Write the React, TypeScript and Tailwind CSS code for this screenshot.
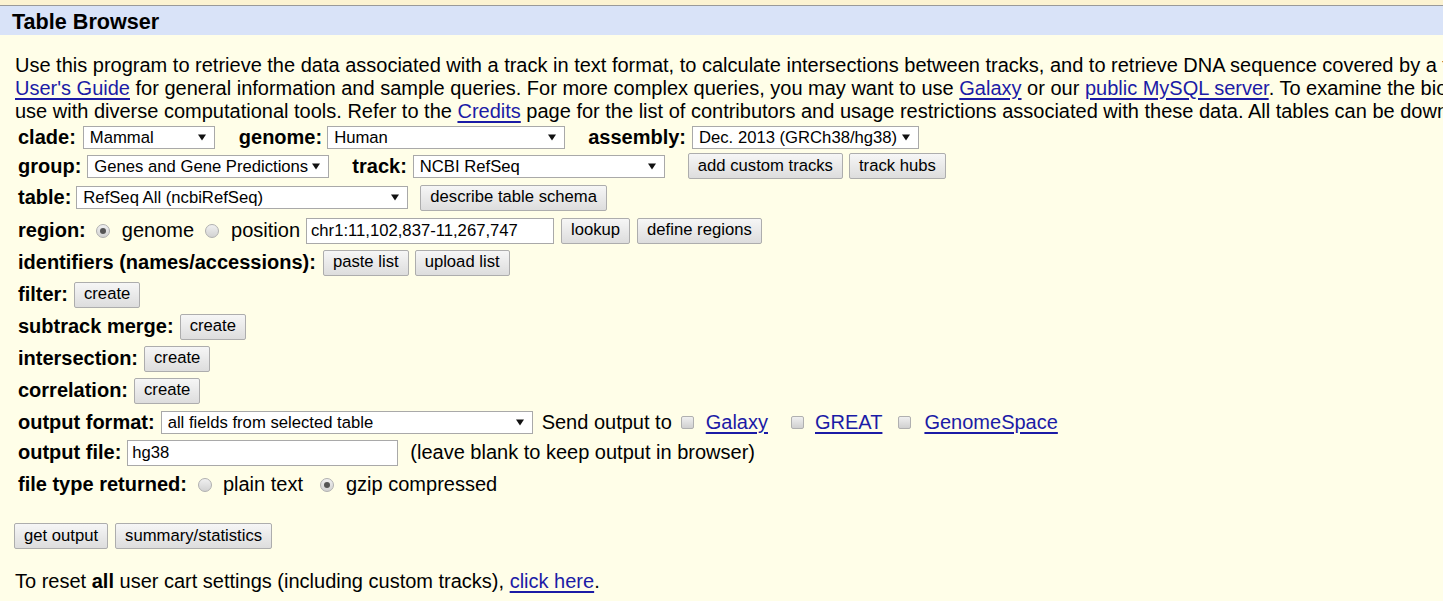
import type { ReactNode } from "react";

function Arrow() {
  return (
    <svg width="8" height="7" viewBox="0 0 8 7" className="shrink-0">
      <path d="M0 0.5 L8 0.5 L4 6.5 Z" fill="#111" />
    </svg>
  );
}

function Select({ value, width }: { value: string; width: string }) {
  return (
    <div
      className={`flex h-[23px] items-center justify-between border border-[#a9a9a9] bg-white pl-[6px] pr-[8px] text-[16.67px] text-black ${width}`}
    >
      <span className="whitespace-nowrap">{value}</span>
      <Arrow />
    </div>
  );
}

function Btn({ children, className = "" }: { children: ReactNode; className?: string }) {
  return (
    <button
      className={`h-[26px] whitespace-nowrap rounded-[2px] border border-[#adadad] bg-gradient-to-b from-[#f6f6f6] to-[#dddddd] px-[9px] text-[16.67px] leading-none text-black ${className}`}
    >
      {children}
    </button>
  );
}

function Radio({ checked, className = "" }: { checked?: boolean; className?: string }) {
  return (
    <span
      className={`flex h-[14px] w-[14px] shrink-0 items-center justify-center rounded-full border border-[#b0b0b0] bg-gradient-to-b from-[#f0f0f0] to-[#d2d2d2] ${className}`}
    >
      {checked && <span className="h-[6px] w-[6px] rounded-full bg-[#555]" />}
    </span>
  );
}

function Check({ className = "" }: { className?: string }) {
  return (
    <span
      className={`h-[13px] w-[13px] shrink-0 rounded-[2px] border border-[#b0b0b0] bg-gradient-to-b from-[#f0f0f0] to-[#d0d0d0] ${className}`}
    />
  );
}

function TextBox({ value, width }: { value: string; width: string }) {
  return (
    <div
      className={`flex h-[26px] items-center border border-[#a9a9a9] bg-white px-[4px] text-[16.67px] ${width}`}
    >
      {value}
    </div>
  );
}

function Label({ children }: { children: ReactNode }) {
  return <b className="whitespace-nowrap font-bold">{children}</b>;
}

function A({ children }: { children: ReactNode }) {
  return <a className="text-[#1b1ba6] underline underline-offset-[3px]">{children}</a>;
}

export default function App() {
  return (
    <div className="min-h-screen w-full overflow-hidden bg-[#fffee8] font-['Liberation_Sans',Arial,sans-serif] text-[20px] leading-[23px] text-black">
      <div className="h-[5px] bg-[#fcf3d2]" />
      <div className="h-[1px] bg-[#9a9a9a]" />
      <div className="flex h-[29px] items-center bg-[#d9e3f8] pl-[12px] pt-[2px] text-[21.6px] font-bold">
        Table Browser
      </div>

      <div className="whitespace-nowrap pl-[15px] pt-[18.5px]">
        Use this program to retrieve the data associated with a track in text format, to calculate
        intersections between tracks, and to retrieve DNA sequence covered by a track. For help in
        using this application see the
        <br />
        <A>User's Guide</A> for general information and sample queries. For more complex queries, you
        may want to use <A>Galaxy</A> or our <A>public MySQL server</A>. To examine the biological
        function of your set through annotation enrichments, send the data to GREAT.
        <br />
        use with diverse computational tools. Refer to the <A>Credits</A> page for the list of
        contributors and usage restrictions associated with these data. All tables can be downloaded
        in their entirety.
      </div>

      <div className="flex flex-col pl-[18px]">
        <div className="flex h-[29px] items-center">
          <Label>clade:</Label>
          <div className="ml-[7px]">
            <Select value="Mammal" width="w-[132px]" />
          </div>
          <div className="ml-[24px]">
            <Label>genome:</Label>
          </div>
          <div className="ml-[5px]">
            <Select value="Human" width="w-[238px]" />
          </div>
          <div className="ml-[23px]">
            <Label>assembly:</Label>
          </div>
          <div className="ml-[6px]">
            <Select value="Dec. 2013 (GRCh38/hg38)" width="w-[227px]" />
          </div>
        </div>

        <div className="flex h-[29px] items-center">
          <Label>group:</Label>
          <div className="ml-[6px]">
            <Select value="Genes and Gene Predictions" width="w-[242px]" />
          </div>
          <div className="ml-[23px]">
            <Label>track:</Label>
          </div>
          <div className="ml-[6px]">
            <Select value="NCBI RefSeq" width="w-[252px]" />
          </div>
          <Btn className="ml-[23px]">add custom tracks</Btn>
          <Btn className="ml-[6px]">track hubs</Btn>
        </div>

        <div className="flex h-[34px] items-center">
          <Label>table:</Label>
          <div className="ml-[5px]">
            <Select value="RefSeq All (ncbiRefSeq)" width="w-[332px]" />
          </div>
          <Btn className="ml-[12px]">describe table schema</Btn>
        </div>

        <div className="flex h-[32px] items-center">
          <Label>region:</Label>
          <Radio checked className="ml-[10px]" />
          <span className="ml-[12px]">genome</span>
          <Radio className="ml-[11px]" />
          <span className="ml-[12px]">position</span>
          <div className="ml-[6px]">
            <TextBox value="chr1:11,102,837-11,267,747" width="w-[248px]" />
          </div>
          <Btn className="ml-[7px]">lookup</Btn>
          <Btn className="ml-[7px]">define regions</Btn>
        </div>

        <div className="flex h-[32px] items-center">
          <Label>identifiers (names/accessions):</Label>
          <Btn className="ml-[7px]">paste list</Btn>
          <Btn className="ml-[6px]">upload list</Btn>
        </div>

        {["filter:", "subtrack merge:", "intersection:", "correlation:"].map((name) => (
          <div key={name} className="flex h-[32px] items-center">
            <Label>{name}</Label>
            <Btn className="ml-[6px]">create</Btn>
          </div>
        ))}

        <div className="flex h-[32px] items-center">
          <Label>output format:</Label>
          <div className="ml-[6px]">
            <Select value="all fields from selected table" width="w-[372px]" />
          </div>
          <span className="ml-[9px] whitespace-nowrap">Send output to</span>
          <Check className="ml-[9px]" />
          <span className="ml-[12px]">
            <A>Galaxy</A>
          </span>
          <Check className="ml-[23px]" />
          <span className="ml-[11px]">
            <A>GREAT</A>
          </span>
          <Check className="ml-[16px]" />
          <span className="ml-[13px]">
            <A>GenomeSpace</A>
          </span>
        </div>

        <div className="flex h-[28px] items-center">
          <Label>output file:</Label>
          <div className="ml-[6px]">
            <TextBox value="hg38" width="w-[271px]" />
          </div>
          <span className="ml-[12px] whitespace-nowrap">(leave blank to keep output in browser)</span>
        </div>

        <div className="flex h-[36px] items-center">
          <Label>file type returned:</Label>
          <Radio className="ml-[11px]" />
          <span className="ml-[11px] whitespace-nowrap">plain text</span>
          <Radio checked className="ml-[17px]" />
          <span className="ml-[12px] whitespace-nowrap">gzip compressed</span>
        </div>
      </div>

      <div className="mt-[18.5px] flex h-[30px] items-center pl-[14px]">
        <Btn>get output</Btn>
        <Btn className="ml-[7px]">summary/statistics</Btn>
      </div>

      <div className="mt-[18.5px] whitespace-nowrap pl-[15px]">
        To reset <b>all</b> user cart settings (including custom tracks), <A>click here</A>.
      </div>
    </div>
  );
}
